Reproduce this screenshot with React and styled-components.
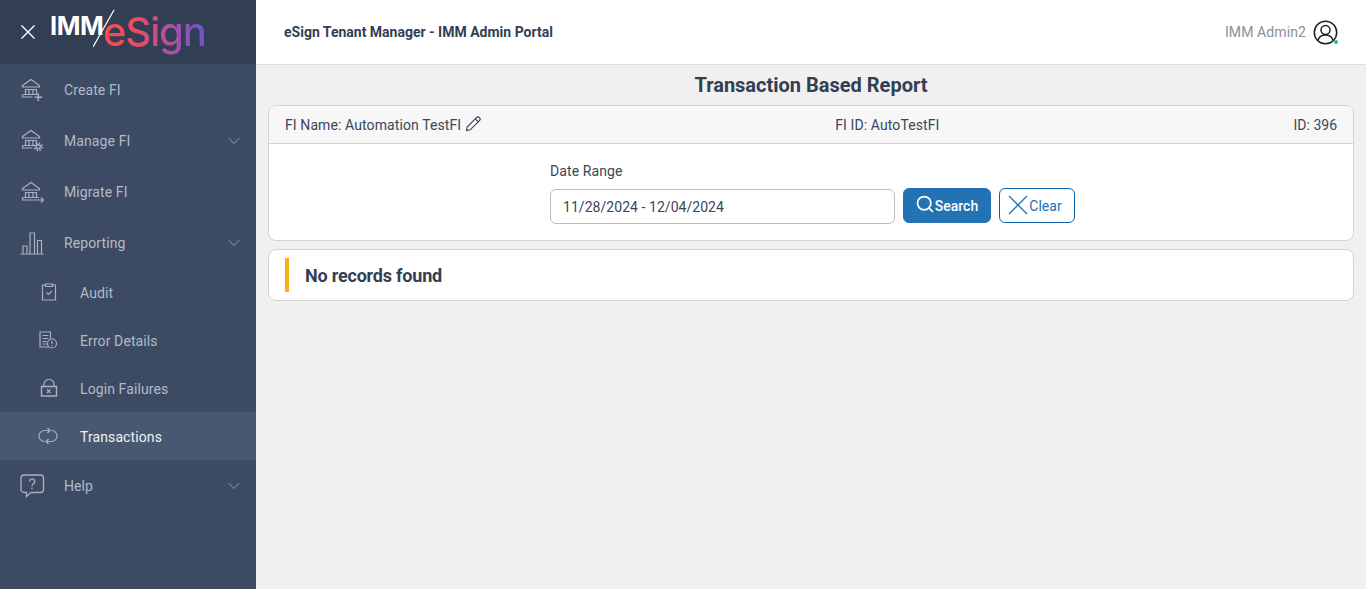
import React from "react";
import styled, { createGlobalStyle } from "styled-components";
import { Search, ChevronDown } from "lucide-react";

const GlobalStyle = createGlobalStyle`
  html, body {
    margin: 0;
    padding: 0;
    height: 100%;
    overflow: hidden;
  }
  body {
    font-family: Roboto, "Liberation Sans", sans-serif;
    font-size: 14px;
    letter-spacing: 0.1px;
    color: #323e54;
    background: #f0f0f0;
  }
`;

const Page = styled.div`
  display: flex;
  width: 1366px;
  height: 589px;
`;
const Sidebar = styled.aside`
  width: 256px;
  flex: none;
  background: #3c4b63;
  color: #b2bac6;
`;
const Brand = styled.div`
  height: 64px;
  background: #323e54;
  display: flex;
  align-items: center;
  padding-left: 21px;
  box-sizing: border-box;
`;
const CloseIcon = styled.svg`
  width: 14px;
  height: 14px;
  flex: none;
  fill: none;
  stroke: #fff;
  stroke-width: 1.4;
`;
const Logo = styled.div`
  position: relative;
  margin-left: 16px;
  height: 64px;
  width: 160px;
`;
const LogoImm = styled.span`
  position: absolute;
  left: -1px;
  top: 13px;
  font: 700 25.5px/26px Inter, Roboto, sans-serif;
  letter-spacing: -0.5px;
  color: #fff;
`;
const LogoSlash = styled.svg`
  position: absolute;
  left: 42px;
  top: 8px;
  width: 28px;
  height: 42px;
`;
const LogoSign = styled.span`
  position: absolute;
  left: 52px;
  top: 8px;
  font: 500 40px/48px Inter, Roboto, sans-serif;
  letter-spacing: -1.1px;
  background: linear-gradient(90deg, #fb4a50 0%, #f24a5c 30%, #b4509c 62%, #6f52cf 100%);
  -webkit-background-clip: text;
  background-clip: text;
  color: transparent;
`;
const Menu = styled.nav`
  display: flex;
  flex-direction: column;
`;
const Item = styled.div`
  height: ${(p) => (p.$sub ? 48 : 51)}px;
  display: flex;
  align-items: center;
  box-sizing: border-box;
  padding-left: ${(p) => (p.$sub ? 36 : 20)}px;
  padding-right: 12px;
  background: ${(p) => (p.$active ? "#485870" : "transparent")};
  color: ${(p) => (p.$active ? "#eef0f3" : "#b2bac6")};
`;
const IconSlot = styled.span`
  width: 44px;
  flex: none;
  display: flex;
  align-items: center;
  svg {
    display: block;
    overflow: visible;
    fill: none;
    stroke: #a9b1be;
    stroke-width: 1.2;
  }
`;
const ItemLabel = styled.span`
  flex: 1;
  margin-top: ${(p) => (p.$sub ? 2 : 0)}px;
`;
const Chevron = styled(ChevronDown)`
  width: 20px;
  height: 20px;
  color: #9aa4b3;
  stroke-width: 1.1;
`;
const Main = styled.div`
  flex: 1;
  min-width: 0;
`;
const Header = styled.header`
  height: 65px;
  box-sizing: border-box;
  background: #fff;
  border-bottom: 1px solid #dcdde1;
  display: flex;
  align-items: center;
  justify-content: space-between;
  padding: 0 28px;
`;
const HeaderTitle = styled.div`
  font-weight: 700;
  letter-spacing: 0;
  color: #323e54;
`;
const User = styled.div`
  display: flex;
  align-items: center;
  gap: 7px;
  color: #8a8f99;
`;
const Avatar = styled.span`
  position: relative;
  width: 25px;
  height: 25px;
  display: block;
  svg {
    display: block;
  }
`;
const Online = styled.span`
  position: absolute;
  right: 0;
  bottom: 1px;
  width: 4px;
  height: 4px;
  border-radius: 50%;
  background: #1fc16b;
`;
const Content = styled.div`
  padding: 0 12px;
`;
const PageTitle = styled.h1`
  margin: 0;
  height: 40px;
  line-height: 41px;
  text-align: center;
  font-size: 20px;
  font-weight: 700;
  letter-spacing: 0;
  color: #323e54;
`;
const Card = styled.section`
  background: #fff;
  border: 1px solid #d3d3d3;
  border-radius: 8px;
  overflow: hidden;
`;
const CardHead = styled.div`
  height: 37px;
  background: #f7f7f7;
  border-bottom: 1px solid #d3d3d3;
  display: flex;
  justify-content: space-between;
  align-items: center;
  padding: 0 16px;
  color: #3a4659;
`;
const FiName = styled.div`
  display: flex;
  align-items: center;
  gap: 4px;
`;
const FiNumber = styled.div`
  letter-spacing: 0;
`;
const EditIcon = styled.svg`
  width: 16px;
  height: 16px;
  fill: none;
  stroke: #323e54;
  stroke-width: 1.1;
  margin-top: -2px;
`;
const FormRow = styled.div`
  height: 96px;
  box-sizing: border-box;
  padding: 19px 0 0 281px;
`;
const FieldLabel = styled.label`
  display: block;
  line-height: 16px;
  margin-bottom: 9px;
  color: #3a4659;
`;
const Controls = styled.div`
  display: flex;
  align-items: flex-start;
  gap: 8px;
`;
const DateInput = styled.input`
  width: 345px;
  height: 35px;
  box-sizing: border-box;
  border: 1px solid #b9bdc7;
  border-radius: 6px;
  padding: 0 12px;
  font: 400 14px Roboto, sans-serif;
  letter-spacing: 0.05px;
  color: #3a4659;
  background: #fff;
  outline: none;
  margin-top: 1px;
`;
const PrimaryButton = styled.button`
  height: 35px;
  width: 88px;
  box-sizing: border-box;
  border: 1px solid #2272b4;
  border-radius: 6px;
  background: #2272b4;
  color: #fff;
  font: 500 14px Roboto, sans-serif;
  display: flex;
  align-items: center;
  justify-content: center;
  padding: 0 1px 0 0;
  svg {
    width: 20px;
    height: 20px;
    margin-top: -4px;
    stroke-width: 2.1;
  }
`;
const OutlineButton = styled.button`
  height: 35px;
  width: 76px;
  box-sizing: border-box;
  border: 1px solid #0f62a8;
  border-radius: 6px;
  background: #fff;
  color: #2272b4;
  font: 400 14px Roboto, sans-serif;
  display: flex;
  align-items: center;
  justify-content: center;
  gap: 1px;
  padding: 0 4px 0 0;
  svg {
    width: 20px;
    height: 20px;
    fill: none;
    stroke: #2272b4;
    stroke-width: 1.3;
    margin-top: -1px;
  }
`;
const Notice = styled(Card)`
  margin-top: 8px;
  height: 52px;
  box-sizing: border-box;
  display: flex;
  align-items: center;
  padding-left: 16px;
`;
const NoticeBar = styled.span`
  width: 4px;
  height: 34px;
  background: #fbad17;
  margin-right: 16px;
`;
const NoticeText = styled.span`
  font-size: 18px;
  font-weight: 700;
  letter-spacing: -0.2px;
  color: #323e54;
`;

const Bank = ({ children, top = 1 }) => (
  <svg width="24" height="24" viewBox="0 0 24 24">
    <g transform={`translate(0 ${top})`}>
      <path d="M2.500 6.500 11 .500l8.500 6v1.500h-17z" />
      <path d="M5 10.500h12M5.500 10.500v5M9 10.500v5M13 10.500v5M16.500 10.500v5M3 15.500h16" />
      <path d="M2.500 15.500v2.500h10" />
    </g>
    {children}
  </svg>
);

const icons = {
  create: (
    <Bank>
      <path d="M18.300 15.500v7.500M14.600 19.300h7.500" strokeWidth="1.500" />
    </Bank>
  ),
  manage: (
    <Bank>
      <circle cx="18.300" cy="17.800" r="2.100" fill="#3c4b63" strokeWidth="1.400" />
      <circle cx="18.300" cy="17.800" r="3.800" strokeDasharray="1.500 1.480" strokeWidth="1.600" />
    </Bank>
  ),
  migrate: (
    <Bank top={2}>
      <path d="M13 20h10.500M21 17.500l2.500 2.500-2.500 2.500" />
    </Bank>
  ),
  reporting: (
    <svg width="24" height="24" viewBox="0 0 24 24">
      <path d="M.5 23h23M3 23v-8h4v8M10 23V2h4.500v21M17.500 23V9.500h4V23" />
    </svg>
  ),
  audit: (
    <svg width="16" height="18" viewBox="0 0 16 18" style={{ marginLeft: 5 }}>
      <path d="M4.500 2H1.500v15h13V2h-3" />
      <path d="M4.500 3V1h7v2.500h-7z" />
      <path d="m5.500 9.500 2 2 3.500-3.500" />
    </svg>
  ),
  error: (
    <svg width="19" height="18" viewBox="0 0 19 18" style={{ marginLeft: 3 }}>
      <path d="M10 16H1V1h10.500v6.500" />
      <path d="M3.500 4.500h6M3.500 7.500h6M3.500 10.500h4M3.500 13h4" />
      <circle cx="13" cy="12.500" r="4.500" />
      <path d="M13 10v3M13 14.200v1" />
    </svg>
  ),
  login: (
    <svg width="18" height="18" viewBox="0 0 18 18" style={{ marginLeft: 4 }}>
      <path d="M1.500 7.500h15v9.500h-15z" strokeWidth="1.400" />
      <path d="M4 7.500V5a5 4.500 0 0 1 10 0v2.500" />
      <path d="m7 10.500 3.500 3.500M10.500 10.500 7 14" />
    </svg>
  ),
  transactions: (
    <svg width="18" height="18" viewBox="0 0 18 18" style={{ marginLeft: 3 }}>
      <path d="M5.500 14.500A5.500 5.500 0 0 1 5.500 3.500H11M8.500 1 11 3.500 8.500 6" />
      <path d="M12.500 3.500A5.500 5.500 0 0 1 12.500 14.500H7M9.500 12 7 14.500 9.500 17" />
    </svg>
  ),
  help: (
    <svg width="24" height="24" viewBox="0 0 24 24">
      <path d="M4 1h16.500a3 3 0 0 1 3 3v11.500a3 3 0 0 1-3 3H11l-4.500 4v-4H4a3 3 0 0 1-3-3V4a3 3 0 0 1 3-3z" strokeWidth="1.300" />
      <path d="M9.500 7.500a2.600 2.600 0 1 1 4 2.200c-1 .7-1.500 1-1.500 2.300M12 13.500v1.500" strokeWidth="1.400" />
    </svg>
  ),
};

const menu = [
  { label: "Create FI", icon: "create" },
  { label: "Manage FI", icon: "manage", arrow: true },
  { label: "Migrate FI", icon: "migrate" },
  { label: "Reporting", icon: "reporting", arrow: true },
  { label: "Audit", icon: "audit", sub: true },
  { label: "Error Details", icon: "error", sub: true },
  { label: "Login Failures", icon: "login", sub: true },
  { label: "Transactions", icon: "transactions", sub: true, active: true },
  { label: "Help", icon: "help", arrow: true },
];

export default function App() {
  return (
    <Page>
      <GlobalStyle />
      <Sidebar>
        <Brand>
          <CloseIcon viewBox="0 0 14 14">
            <path d="m.5.500 13 13M13.500.500l-13 13" />
          </CloseIcon>
          <Logo>
            <LogoImm>IMM</LogoImm>
            <LogoSign>eSign</LogoSign>
            <LogoSlash viewBox="0 0 28 42">
              <path d="M0 39 21 2" stroke="#fff" strokeWidth="1.200" fill="none" />
            </LogoSlash>
          </Logo>
        </Brand>
        <Menu>
          {menu.map((m) => (
            <Item key={m.label} $sub={m.sub} $active={m.active}>
              <IconSlot>{icons[m.icon]}</IconSlot>
              <ItemLabel $sub={m.sub}>{m.label}</ItemLabel>
              {m.arrow && <Chevron />}
            </Item>
          ))}
        </Menu>
      </Sidebar>
      <Main>
        <Header>
          <HeaderTitle>eSign Tenant Manager - IMM Admin Portal</HeaderTitle>
          <User>
            IMM Admin2
            <Avatar>
              <svg width="25" height="25" viewBox="0 0 25 25" fill="none" stroke="#1d2026" strokeWidth="1.500">
                <circle cx="12.500" cy="12.500" r="11.200" />
                <circle cx="12.500" cy="10" r="4.500" />
                <path d="M5 20.500c.8-3.500 3.500-5.500 7.500-5.500s6.700 2 7.500 5.500" />
              </svg>
              <Online />
            </Avatar>
          </User>
        </Header>
        <Content>
          <PageTitle>Transaction Based Report</PageTitle>
          <Card>
            <CardHead>
              <FiName>
                FI Name: Automation TestFI
                <EditIcon viewBox="0 0 16 16">
                  <path d="M1.500 14.500 2.300 10.800 11.500 1.600a2.100 2.100 0 0 1 3 3L5.200 13.800z" />
                  <path d="M10.300 2.800l3 3" />
                </EditIcon>
              </FiName>
              <div>FI ID: AutoTestFI</div>
              <FiNumber>ID: 396</FiNumber>
            </CardHead>
            <FormRow>
              <FieldLabel>Date Range</FieldLabel>
              <Controls>
                <DateInput readOnly value="11/28/2024 - 12/04/2024" />
                <PrimaryButton>
                  <Search />
                  Search
                </PrimaryButton>
                <OutlineButton>
                  <svg viewBox="0 0 20 20">
                    <path d="m1 1 18 18M19 1 1 19" />
                  </svg>
                  Clear
                </OutlineButton>
              </Controls>
            </FormRow>
          </Card>
          <Notice>
            <NoticeBar />
            <NoticeText>No records found</NoticeText>
          </Notice>
        </Content>
      </Main>
    </Page>
  );
}
